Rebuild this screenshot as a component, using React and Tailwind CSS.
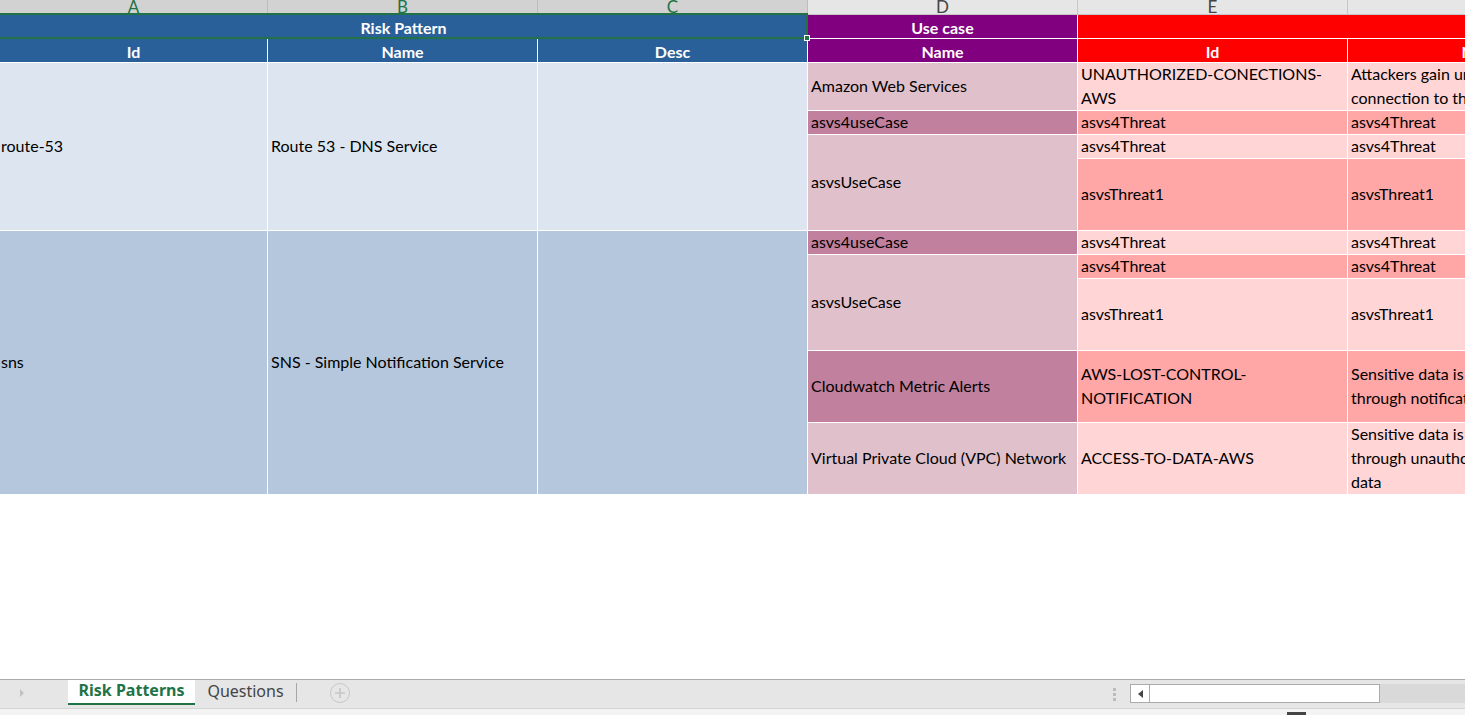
import React from 'react';

const BLUE = 'bg-[#2a6099]';

const Cell = ({ className = '', children, pad = 'pl-[3px]' }) => (
  <div className={`flex items-center ${pad} text-[16px] leading-[24px] text-black whitespace-nowrap overflow-visible ${className}`}>
    <div className="-mt-[1px]">{children}</div>
  </div>
);

const Head = ({ className = '', children }) => (
  <div className={`flex items-center justify-center pt-[1px] text-white font-bold text-[16px] leading-[21px] ${className}`}>
    {children}
  </div>
);

const ColHead = ({ letter, width, selected }) => (
  <div
    className={`${width} h-full shrink-0 border-r flex items-end justify-center overflow-hidden ${
      selected ? 'bg-[#d2d2d2] border-[#bcbcbc] text-[#217346]' : 'bg-[#e6e6e6] border-[#c6c6c6] text-[#444444]'
    }`}
  >
    <span className="text-[17px] leading-none mb-[-1px]">{letter}</span>
  </div>
);

export default function App() {
  return (
    <div className="w-[1465px] h-[715px] overflow-hidden bg-white flex flex-col font-['Lato','Liberation_Sans',sans-serif]">
      {/* sheet area */}
      <div className="flex-1 relative overflow-hidden">
        {/* column letters */}
        <div className="h-[15px] flex border-b border-[#c6c6c6]">
          <ColHead letter="A" width="w-[268px]" selected />
          <ColHead letter="B" width="w-[270px]" selected />
          <ColHead letter="C" width="w-[270px]" selected />
          <ColHead letter="D" width="w-[270px]" />
          <ColHead letter="E" width="w-[270px]" />
          <ColHead letter="F" width="w-[270px]" />
        </div>

        {/* cells */}
        <div className="grid gap-px bg-white w-[1617px] grid-cols-[267px_269px_269px_269px_269px_269px] grid-rows-[23px_23px_47px_23px_23px_71px_23px_23px_71px_71px_71px]">
          {/* group headers */}
          <Head className={`col-span-3 ${BLUE}`}>Risk Pattern</Head>
          <Head className="bg-[#800080]">Use case</Head>
          <Head className="col-span-2 bg-[#ff0000]"></Head>

          <Head className={BLUE}>Id</Head>
          <Head className={BLUE}>Name</Head>
          <Head className={BLUE}>Desc</Head>
          <Head className="bg-[#800080]">Name</Head>
          <Head className="bg-[#ff0000]">Id</Head>
          <Head className="bg-[#ff0000]">Name</Head>

          {/* route-53 */}
          <Cell className="row-span-4 col-start-1 row-start-3 bg-[#dde6f0]" pad="pl-[1px]">route-53</Cell>
          <Cell className="row-span-4 col-start-2 row-start-3 bg-[#dde6f0]">Route 53 - DNS Service</Cell>
          <Cell className="row-span-4 col-start-3 row-start-3 bg-[#dde6f0]"></Cell>

          <Cell className="col-start-4 row-start-3 bg-[#e0c1cb]">Amazon Web Services</Cell>
          <Cell className="col-start-5 row-start-3 bg-[#ffd5d5]">UNAUTHORIZED-CONECTIONS-<br />AWS</Cell>
          <Cell className="col-start-6 row-start-3 bg-[#ffd5d5]">Attackers gain unauthorized<br />connection to the application</Cell>

          <Cell className="col-start-4 row-start-4 bg-[#c0809e]">asvs4useCase</Cell>
          <Cell className="col-start-5 row-start-4 bg-[#ffa6a6]">asvs4Threat</Cell>
          <Cell className="col-start-6 row-start-4 bg-[#ffa6a6]">asvs4Threat</Cell>

          <Cell className="col-start-4 row-start-5 row-span-2 bg-[#e0c1cb]">asvsUseCase</Cell>
          <Cell className="col-start-5 row-start-5 bg-[#ffd5d5]">asvs4Threat</Cell>
          <Cell className="col-start-6 row-start-5 bg-[#ffd5d5]">asvs4Threat</Cell>
          <Cell className="col-start-5 row-start-6 bg-[#ffa6a6]">asvsThreat1</Cell>
          <Cell className="col-start-6 row-start-6 bg-[#ffa6a6]">asvsThreat1</Cell>

          {/* sns */}
          <Cell className="row-span-5 col-start-1 row-start-7 bg-[#b5c7dd]" pad="pl-[1px]">sns</Cell>
          <Cell className="row-span-5 col-start-2 row-start-7 bg-[#b5c7dd]">SNS - Simple Notification Service</Cell>
          <Cell className="row-span-5 col-start-3 row-start-7 bg-[#b5c7dd]"></Cell>

          <Cell className="col-start-4 row-start-7 bg-[#c0809e]">asvs4useCase</Cell>
          <Cell className="col-start-5 row-start-7 bg-[#ffd5d5]">asvs4Threat</Cell>
          <Cell className="col-start-6 row-start-7 bg-[#ffd5d5]">asvs4Threat</Cell>

          <Cell className="col-start-4 row-start-8 row-span-2 bg-[#e0c1cb]">asvsUseCase</Cell>
          <Cell className="col-start-5 row-start-8 bg-[#ffa6a6]">asvs4Threat</Cell>
          <Cell className="col-start-6 row-start-8 bg-[#ffa6a6]">asvs4Threat</Cell>
          <Cell className="col-start-5 row-start-9 bg-[#ffd5d5]">asvsThreat1</Cell>
          <Cell className="col-start-6 row-start-9 bg-[#ffd5d5]">asvsThreat1</Cell>

          <Cell className="col-start-4 row-start-10 bg-[#c0809e]">Cloudwatch Metric Alerts</Cell>
          <Cell className="col-start-5 row-start-10 bg-[#ffa6a6]">AWS-LOST-CONTROL-<br />NOTIFICATION</Cell>
          <Cell className="col-start-6 row-start-10 bg-[#ffa6a6]">Sensitive data is exposed<br />through notification channels</Cell>

          <Cell className="col-start-4 row-start-11 bg-[#e0c1cb]">Virtual Private Cloud (VPC) Network</Cell>
          <Cell className="col-start-5 row-start-11 bg-[#ffd5d5]">ACCESS-TO-DATA-AWS</Cell>
          <Cell className="col-start-6 row-start-11 bg-[#ffd5d5]">Sensitive data is exposed<br />through unauthorized access to<br />data</Cell>
        </div>

        {/* selection of A1:C1 */}
        <div className="absolute left-[-2px] top-[13px] w-[810px] h-[26px] border-2 border-[#217346] pointer-events-none" />
        <div className="absolute left-[804px] top-[35px] w-[6px] h-[6px] bg-[#217346] border border-white" />
      </div>

      {/* sheet tabs */}
      <div className="h-[29px] bg-[#e6e6e6] border-t border-[#ababab] flex items-start font-['Noto_Sans','Liberation_Sans',sans-serif]">
        <div className="w-[68px] h-[25px] flex items-center pl-[19px]">
          <svg width="6" height="10" viewBox="0 0 6 10">
            <path d="M1 1 L5 5 L1 9 Z" fill="#c2c2c2" />
          </svg>
        </div>
        <div className="w-[127px] h-[25px] bg-white border-b-2 border-[#217346] flex items-center justify-center pb-[3px] text-[16px] leading-[20px] font-bold text-[#217346]">
          Risk Patterns
        </div>
        <div className="w-[101px] h-[25px] flex items-center justify-center pb-[3px] text-[16px] leading-[20px] text-[#444444]">
          Questions
        </div>
        <div className="w-px h-[19px] mt-[3px] bg-[#a6a6a6]" />
        <div className="ml-[33px] mt-[3px] w-[20px] h-[20px] rounded-full border border-[#c6c6c6] flex items-center justify-center">
          <svg width="12" height="12" viewBox="0 0 12 12">
            <path d="M6 1 V11 M1 6 H11" stroke="#c6c6c6" strokeWidth="1.6" />
          </svg>
        </div>
        <div className="flex-1" />
        <div className="mt-[8px] flex flex-col gap-[2px] mr-[14px]">
          <div className="w-[3px] h-[3px] bg-[#bcbcbc]" />
          <div className="w-[3px] h-[3px] bg-[#bcbcbc]" />
          <div className="w-[3px] h-[3px] bg-[#bcbcbc]" />
        </div>
        <div className="mt-[4px] w-[250px] h-[19px] bg-white border border-[#ababab] flex">
          <div className="w-[19px] h-full border-r border-[#ababab] flex items-center justify-center">
            <svg width="5" height="8" viewBox="0 0 5 8">
              <path d="M5 0 L0 4 L5 8 Z" fill="#444444" />
            </svg>
          </div>
        </div>
        <div className="mt-[4px] w-[85px] h-[19px] bg-[#d9d9d9]" />
      </div>

      {/* status strip */}
      <div className="h-[7px] bg-[#f3f3f3] border-t border-[#d4d4d4] flex">
        <div className="ml-[1287px] mt-[3px] w-[19px] h-[3px] bg-[#444444]" />
      </div>
    </div>
  );
}
